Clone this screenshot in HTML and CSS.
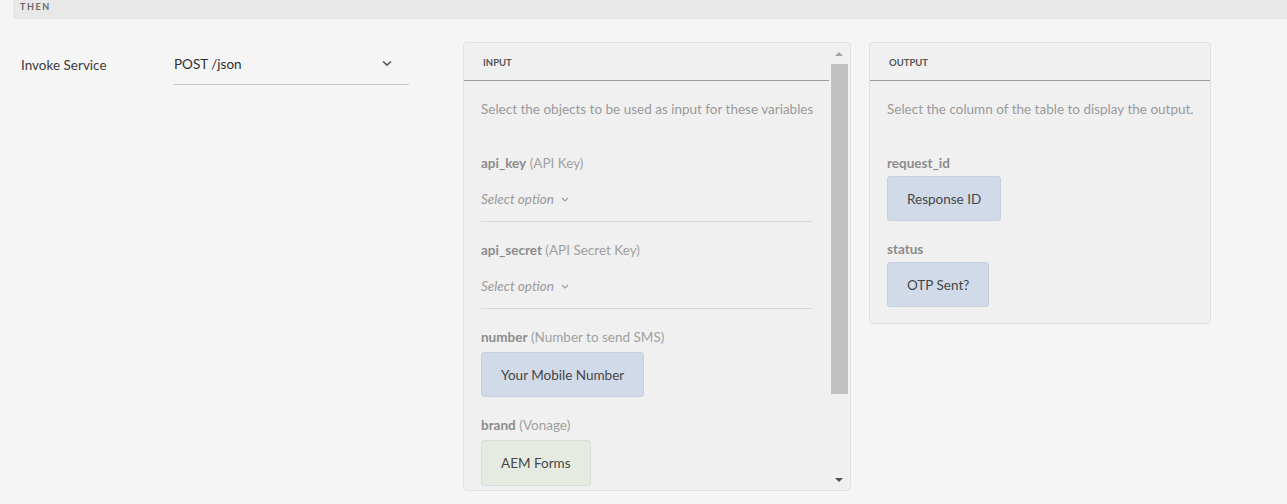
FILE: index.html
```html
<!DOCTYPE html>
<html>
<head>
<meta charset="utf-8">
<link rel="stylesheet" href="styles.css">
</head>
<body>
<div class="then-bar">THEN</div>
<div class="row">
  <div class="label-col">Invoke Service</div>
  <div class="dropdown">
    <span>POST /json</span>
    <svg class="chev" width="10" height="7" viewBox="0 0 10 7"><path d="M1 1.5 L5 5.2 L9 1.5" fill="none" stroke="#5a5a5a" stroke-width="1.6"/></svg>
  </div>
  <div class="panel input-panel">
    <div class="panel-main">
      <div class="panel-head">INPUT</div>
      <div class="panel-body">
        <div class="desc">Select the objects to be used as input for these variables</div>
        <div class="field first">
          <div class="f-label"><b>api_key</b> (API Key)</div>
          <div class="select">Select option <svg width="8" height="5" viewBox="0 0 8 5"><path d="M1 1 L4 4 L7 1" fill="none" stroke="#9a9a9a" stroke-width="1.2"/></svg></div>
        </div>
        <div class="field">
          <div class="f-label"><b>api_secret</b> (API Secret Key)</div>
          <div class="select">Select option <svg width="8" height="5" viewBox="0 0 8 5"><path d="M1 1 L4 4 L7 1" fill="none" stroke="#9a9a9a" stroke-width="1.2"/></svg></div>
        </div>
        <div class="field chip-field">
          <div class="f-label"><b>number</b> (Number to send SMS)</div>
          <div class="chip blue">Your Mobile Number</div>
        </div>
        <div class="field chip-field">
          <div class="f-label"><b>brand</b> (Vonage)</div>
          <div class="chip green">AEM Forms</div>
        </div>
      </div>
    </div>
    <div class="scrollbar">
      <div class="arrow up"></div>
      <div class="thumb"></div>
      <div class="track-rest"></div>
      <div class="arrow down"></div>
    </div>
  </div>
  <div class="panel output-panel">
    <div class="panel-main">
      <div class="panel-head">OUTPUT</div>
      <div class="panel-body out-body">
        <div class="desc">Select the column of the table to display the output.</div>
        <div class="out-field first">
          <div class="f-label"><b>request_id</b></div>
          <div class="chip blue">Response ID</div>
        </div>
        <div class="out-field">
          <div class="f-label"><b>status</b></div>
          <div class="chip blue">OTP Sent?</div>
        </div>
      </div>
    </div>
  </div>
</div>
</body>
</html>
```

FILE: styles.css
```css
* { box-sizing: border-box; }
body {
  margin: 0;
  background: #f5f5f5;
  font-family: Lato, "Open Sans", sans-serif;
  font-size: 13.5px;
  color: #4b4b4b;
  width: 1287px;
  height: 504px;
  overflow: hidden;
}
.then-bar {
  margin-left: 13px;
  height: 19px;
  background: #e8e8e8;
  padding-left: 7px;
  font-size: 9px;
  font-weight: 700;
  letter-spacing: 1.6px;
  line-height: 14px;
  color: #6a6a6a;
}
.row {
  display: flex;
  align-items: flex-start;
  padding-top: 23px;
}
.label-col {
  width: 174px;
  padding-left: 21px;
  line-height: 20px;
  margin-top: 13px;
  color: #3c3c3c;
}
.dropdown {
  width: 235px;
  height: 43px;
  border-bottom: 1px solid #c6c6ce;
  display: flex;
  align-items: center;
  justify-content: space-between;
  padding: 2px 17px 0 0;
  color: #2f2f2f;
}
.chev { margin-top: -2px; }
.panel {
  background: #f0f0f0;
  border: 1px solid #e1e1e1;
  border-radius: 4px;
  display: flex;
}
.input-panel {
  margin-left: 54px;
  width: 388px;
  height: 449px;
  overflow: hidden;
}
.output-panel {
  margin-left: 18px;
  width: 342px;
}
.panel-main {
  flex: 1;
  min-width: 0;
}
.input-panel .panel-main { width: 365px; flex: none; }
.panel-head {
  height: 38px;
  border-bottom: 1px solid #9b9b9b;
  padding: 1px 0 0 19px;
  font-size: 9.5px;
  font-weight: 700;
  color: #555;
  line-height: 37px;
}
.panel-body {
  padding: 0 17px;
}
.out-body { padding-bottom: 16px; }
.desc {
  margin-top: 18px;
  line-height: 20px;
  color: #9a9a9a;
  white-space: nowrap;
}
.f-label {
  line-height: 20px;
  color: #a0a0a0;
  white-space: nowrap;
}
.f-label b {
  color: #8c8c8c;
  font-weight: 700;
}
.field { margin-top: 18px; }
.field.first { margin-top: 34px; }
.select {
  margin-top: 16px;
  line-height: 20px;
  font-style: italic;
  color: #9a9a9a;
  padding-bottom: 12px;
  border-bottom: 1px solid #d8d8d8;
}
.select svg { margin-left: 4px; vertical-align: middle; margin-top: -3px; }
.chip-field .chip { margin-top: 5px; }
.chip {
  display: inline-flex;
  align-items: center;
  height: 45px;
  padding: 0 19px;
  border-radius: 3px;
  color: #464646;
}
.chip.blue {
  background: #d1dae8;
  border: 1px solid #c6d0df;
}
.chip.green {
  background: #e6ebe2;
  border: 1px solid #d8dfd3;
  height: 46px;
}
.out-field { margin-top: 18px; }
.out-field.first { margin-top: 34px; }
.out-field .chip { margin-top: 3px; }
.scrollbar {
  width: 17px;
  margin-left: 2px;
  display: flex;
  flex-direction: column;
}
.arrow {
  height: 21px;
  position: relative;
}
.arrow.up::after, .arrow.down::after {
  content: "";
  position: absolute;
  left: 4px;
  border-left: 4px solid transparent;
  border-right: 4px solid transparent;
}
.arrow.up::after {
  top: 9px;
  border-bottom: 4px solid #a3a3a3;
}
.arrow.down {
  height: 22px;
}
.arrow.down::after {
  top: 10px;
  border-top: 4px solid #505050;
}
.thumb {
  height: 330px;
  background: #c1c1c1;
}
.track-rest { flex: 1; }
```
